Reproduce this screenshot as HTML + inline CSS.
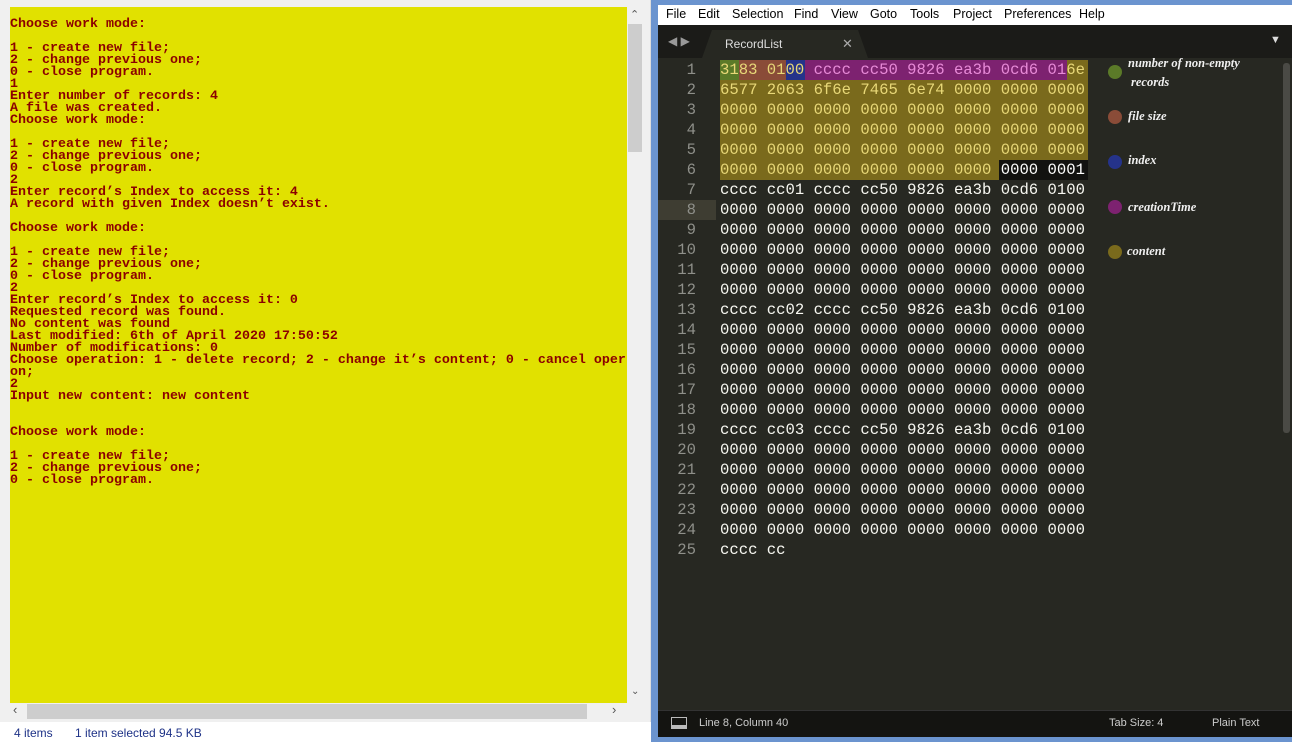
<!DOCTYPE html>
<html><head><meta charset="utf-8"><style>
*{margin:0;padding:0;box-sizing:border-box}
body{width:1292px;height:742px;overflow:hidden;background:#f0f0f0;position:relative;font-family:"Liberation Sans",sans-serif}
.abs{position:absolute}
#con{left:10px;top:7px;width:617px;height:696px;background:#e1e100;overflow:hidden}
#con pre{position:absolute;left:0;top:12px;font:bold 13.33px/12px "Liberation Mono",monospace;color:#8b0000;white-space:pre}
#ed{left:658px;top:58px;width:634px;height:652px;background:#272822}
.code{position:absolute;left:720px;font:15.6px/20px "Liberation Mono",monospace;color:#f8f8f2;white-space:pre}
.gut{position:absolute;left:660px;width:36px;text-align:right;font:15.6px/20px "Liberation Mono",monospace;color:#8f908a}
.leg{position:absolute;font:italic bold 12.5px "Liberation Serif",serif;color:#f0f0f0}
.dot{position:absolute;left:1108px;width:14px;height:14px;border-radius:50%}
.m{position:absolute;top:7px;font-size:12.5px;color:#000}
</style></head><body>
<div class="abs" style="left:0;top:0;width:651px;height:722px;background:#f0f0f0;border-right:1px solid #ddd"></div>
<div class="abs" id="con"><pre>Choose work mode:

1 - create new file;
2 - change previous one;
0 - close program.
1
Enter number of records: 4
A file was created.
Choose work mode:

1 - create new file;
2 - change previous one;
0 - close program.
2
Enter record’s Index to access it: 4
A record with given Index doesn’t exist.

Choose work mode:

1 - create new file;
2 - change previous one;
0 - close program.
2
Enter record’s Index to access it: 0
Requested record was found.
No content was found
Last modified: 6th of April 2020 17:50:52
Number of modifications: 0
Choose operation: 1 - delete record; 2 - change it’s content; 0 - cancel oper
on;
2
Input new content: new content


Choose work mode:

1 - create new file;
2 - change previous one;
0 - close program.</pre></div>
<div class="abs" style="left:627px;top:7px;width:16px;height:696px;background:#f0f0f0"></div>
<div class="abs" style="left:628px;top:24px;width:14px;height:128px;background:#cdcdcd"></div>
<div class="abs" style="left:630px;top:8px;font-size:11px;color:#555">⌃</div>
<div class="abs" style="left:631px;top:686px;font-size:10px;color:#555">⌄</div>
<div class="abs" style="left:10px;top:703px;width:617px;height:17px;background:#f0f0f0"></div>
<div class="abs" style="left:27px;top:704px;width:560px;height:15px;background:#cdcdcd"></div>
<div class="abs" style="left:13px;top:702px;font-size:13px;color:#555">‹</div>
<div class="abs" style="left:612px;top:702px;font-size:13px;color:#555">›</div>
<div class="abs" style="left:0;top:722px;width:651px;height:20px;background:#fff;overflow:hidden">
<div class="abs" style="left:14px;top:4px;font-size:12px;color:#1e3287">4 items</div>
<div class="abs" style="left:75px;top:4px;font-size:12px;color:#1e3287">1 item selected 94.5 KB</div></div>
<div class="abs" style="left:651px;top:0;width:641px;height:742px;background:#6b94cf"></div>
<div class="abs" style="left:658px;top:5px;width:634px;height:20px;background:#fff"></div>
<span class="m" style="left:666px">File</span><span class="m" style="left:698px">Edit</span><span class="m" style="left:732px">Selection</span><span class="m" style="left:794px">Find</span><span class="m" style="left:831px">View</span><span class="m" style="left:870px">Goto</span><span class="m" style="left:910px">Tools</span><span class="m" style="left:953px">Project</span><span class="m" style="left:1004px">Preferences</span><span class="m" style="left:1079px">Help</span>
<div class="abs" style="left:658px;top:25px;width:634px;height:33px;background:#1b1b18"></div>
<div class="abs" style="left:702px;top:30px;width:166px;height:28px;background:#272822;clip-path:polygon(6% 0,94% 0,100% 100%,0 100%)"></div>
<div class="abs" style="left:668px;top:34px;font-size:12px;color:#999">◀ ▶</div>
<div class="abs" style="left:725px;top:37px;font-size:12px;color:#ddd">RecordList</div>
<div class="abs" style="left:842px;top:36px;font-size:13px;color:#aaa">✕</div>
<div class="abs" style="left:1270px;top:34px;font-size:11px;color:#ddd">▼</div>
<div class="abs" id="ed"></div>
<div class="abs" style="left:658px;top:200px;width:58px;height:20px;background:#3e3d32"></div>
<div class="abs" style="left:720px;top:60px;width:368px;height:100px;background:#7a6a1c"></div>
<div class="abs" style="left:720px;top:160px;width:279px;height:20px;background:#7a6a1c"></div>
<div class="abs" style="left:999px;top:160px;width:89px;height:20px;background:#121210"></div>
<div class="abs" style="left:720px;top:60px;width:19px;height:20px;background:#5b7a28"></div>
<div class="abs" style="left:739px;top:60px;width:47px;height:20px;background:#8a4c38"></div>
<div class="abs" style="left:786px;top:60px;width:19px;height:20px;background:#25338a"></div>
<div class="abs" style="left:805px;top:60px;width:262px;height:20px;background:#7d2270"></div>
<div class="gut" style="top:60px">1<br>2<br>3<br>4<br>5<br>6<br>7<br>8<br>9<br>10<br>11<br>12<br>13<br>14<br>15<br>16<br>17<br>18<br>19<br>20<br>21<br>22<br>23<br>24<br>25</div>
<div class="code" style="top:60px;color:#e8d878">3183 0100 <span style="color:#e88ad8">cccc cc50 9826 ea3b 0cd6 01</span>6e
6577 2063 6f6e 7465 6e74 0000 0000 0000
0000 0000 0000 0000 0000 0000 0000 0000
0000 0000 0000 0000 0000 0000 0000 0000
0000 0000 0000 0000 0000 0000 0000 0000
0000 0000 0000 0000 0000 0000 <span style="color:#fff">0000 0001</span></div>
<div class="code" style="top:180px">cccc cc01 cccc cc50 9826 ea3b 0cd6 0100
0000 0000 0000 0000 0000 0000 0000 0000
0000 0000 0000 0000 0000 0000 0000 0000
0000 0000 0000 0000 0000 0000 0000 0000
0000 0000 0000 0000 0000 0000 0000 0000
0000 0000 0000 0000 0000 0000 0000 0000
cccc cc02 cccc cc50 9826 ea3b 0cd6 0100
0000 0000 0000 0000 0000 0000 0000 0000
0000 0000 0000 0000 0000 0000 0000 0000
0000 0000 0000 0000 0000 0000 0000 0000
0000 0000 0000 0000 0000 0000 0000 0000
0000 0000 0000 0000 0000 0000 0000 0000
cccc cc03 cccc cc50 9826 ea3b 0cd6 0100
0000 0000 0000 0000 0000 0000 0000 0000
0000 0000 0000 0000 0000 0000 0000 0000
0000 0000 0000 0000 0000 0000 0000 0000
0000 0000 0000 0000 0000 0000 0000 0000
0000 0000 0000 0000 0000 0000 0000 0000
cccc cc</div>
<div class="dot" style="top:65px;background:#5b7a28"></div>
<div class="dot" style="top:110px;background:#8a4c38"></div>
<div class="dot" style="top:155px;background:#25338a"></div>
<div class="dot" style="top:200px;background:#7d2270"></div>
<div class="dot" style="top:245px;background:#7a6a1c"></div>
<div class="leg" style="left:1128px;top:56px">number of non-empty</div>
<div class="leg" style="left:1131px;top:75px">records</div>
<div class="leg" style="left:1128px;top:109px">file size</div>
<div class="leg" style="left:1128px;top:153px">index</div>
<div class="leg" style="left:1128px;top:200px">creationTime</div>
<div class="leg" style="left:1127px;top:244px">content</div>
<div class="abs" style="left:1283px;top:63px;width:7px;height:370px;background:#4a4a45;border-radius:3px"></div>
<div class="abs" style="left:658px;top:710px;width:634px;height:27px;background:#141411;border-top:1px solid #333"></div>
<div class="abs" style="left:671px;top:717px;width:16px;height:12px;border:1px solid #bbb;border-bottom:4px solid #bbb"></div>
<div class="abs" style="left:699px;top:717px;font-size:11px;color:#ccc">Line 8, Column 40</div>
<div class="abs" style="left:1109px;top:717px;font-size:11px;color:#ccc">Tab Size: 4</div>
<div class="abs" style="left:1212px;top:717px;font-size:11px;color:#ccc">Plain Text</div>
</body></html>
